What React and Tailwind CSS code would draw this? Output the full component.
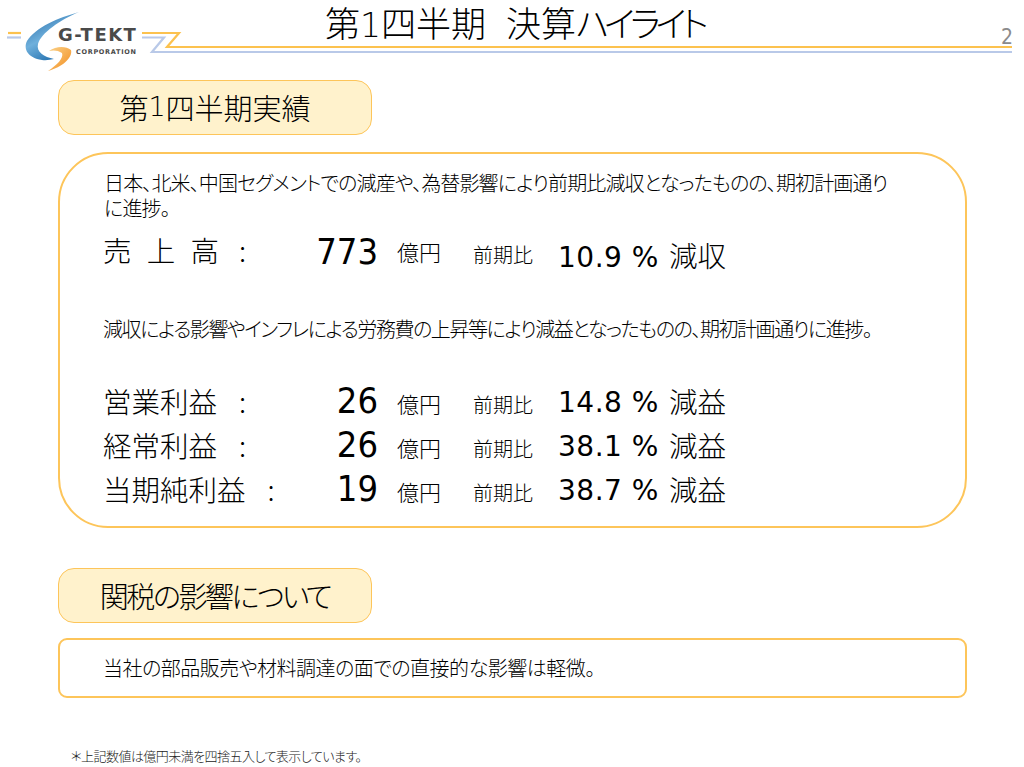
const rows = [
  { label: "営業利益", n: "26", v: "14.8 %", r: "減益" },
  { label: "経常利益", n: "26", v: "38.1 %", r: "減益" },
  { label: "当期純利益", n: "19", v: "38.7 %", r: "減益" },
];

function Logo() {
  return (
    <svg className="absolute left-0 top-0" width="1024" height="80" viewBox="0 0 1024 80" fill="none">
      <defs>
        <linearGradient id="sw" x1="0" y1="0" x2="0.6" y2="1">
          <stop offset="0" stopColor="#1a5f9e" />
          <stop offset="0.55" stopColor="#6fb0dc" />
          <stop offset="1" stopColor="#1f6cab" />
        </linearGradient>
        <linearGradient id="or" x1="0" y1="0" x2="1" y2="1">
          <stop offset="0" stopColor="#fbd38a" />
          <stop offset="1" stopColor="#f28c1e" />
        </linearGradient>
      </defs>
      <path d="M8 33H21" stroke="#fcc24f" strokeWidth="2.2" />
      <path d="M7 37.500H21" stroke="#b9c9e8" strokeWidth="2.2" />
      <path d="M79 12C58 18 36 27 27 41C23 49 28 58 42 60C46 60.500 50 60 54 59C44 57 36 52 38 44C41 33 60 20 79 12Z" fill="url(#sw)" />
      <path d="M49 51C56 46 66 46 71 50C73 58 62 67 48 71C57 65 64 58 62 53C58 50 53 50 49 51Z" fill="url(#or)" />
      <path d="M142 33H179L167 47H1012" stroke="#fcc24f" strokeWidth="2.200" />
      <path d="M142 37.500H164L152 52H1012" stroke="#b9c9e8" strokeWidth="2.200" />
    </svg>
  );
}

function Pill({ children, mt }) {
  return (
    <div className={`w-[314px] h-[55px] rounded-[16px] border-[1.5px] border-[#fdc55a] bg-[#fff2cc] flex items-center justify-center text-[29px] text-black whitespace-pre ${mt}`}>
      {children}
    </div>
  );
}

const num = "[font-family:'DejaVu_Sans_Condensed','DejaVu_Sans',sans-serif] font-normal";
const val = "[font-family:'DejaVu_Sans',sans-serif] font-normal";
const thin = "[font-family:'DejaVu_Sans',sans-serif] font-extralight";

function Stat({ label, spaced, n, v, r, first, colonGap }) {
  return (
    <div className={`grid grid-cols-[213px_62px_95px_85px_111px_auto] items-baseline h-[44px] ${first ? "mt-[5px]" : ""}`}>
      <div className={`text-[28.5px] whitespace-pre flex items-baseline ${first ? "-translate-y-[2px]" : ""}`}>
        <span className={spaced ? "[word-spacing:9px]" : ""}>{label}</span>
        <span className={colonGap}>:</span>
      </div>
      <div className={`text-[36px] text-right ${num}`}>{n}</div>
      <div className={`text-[22px] pl-[19px] whitespace-nowrap ${first ? "-translate-y-[3px]" : ""}`}>億円</div>
      <div className={`text-[20px] whitespace-nowrap ${first ? "-translate-y-[1px]" : ""}`}>前期比</div>
      <div className={`text-[28px] tracking-[0.5px] whitespace-pre ${val} ${first ? "translate-y-[3px]" : "-translate-y-[1px]"}`}>{v}</div>
      <div className={`text-[28.5px] whitespace-nowrap ${first ? "translate-y-[3px]" : ""}`}>{r}</div>
    </div>
  );
}

export default function App() {
  return (
    <div className="relative w-[1024px] h-[767px] overflow-hidden bg-white text-black font-light [font-family:'Noto_Sans_CJK_JP',sans-serif] [font-feature-settings:'palt']">
      <Logo />
      <header className="relative h-[80px]">
        <div className="absolute left-[58px] top-[26px] text-[18px] font-bold tracking-[1.5px] text-[#4a4a4a] leading-none [font-family:'DejaVu_Sans',sans-serif]">G-TEKT</div>
        <div className="absolute left-[76px] top-[49px] text-[6.500px] font-bold tracking-[0.7px] text-[#4a4a4a] leading-none [font-family:'DejaVu_Sans',sans-serif]">CORPORATION</div>
        <h1 className="absolute left-[325px] top-0 text-[35px] font-light leading-[44px] whitespace-pre text-black">
          第<span className={`${thin} text-[33px]`}>1</span>四半期<span className="inline-block w-[20px]"></span>決算<span className="tracking-[-4.8px]">ハイライト</span>
        </h1>
        <div className={`absolute right-[11px] top-[27px] text-[21px] leading-none text-[#8b8b8b] ${num}`}>2</div>
      </header>
      <main className="pl-[58px]">
        <Pill>第<span className={`${thin} text-[27px]`}>1</span>四半期実績</Pill>
        <section className="mt-[17px] w-[909px] h-[376px] rounded-[50px] border-2 border-[#fdc55a] pl-[43px] pt-[16px]">
          <p className="text-[20px] leading-[25px] tracking-[-0.87px] w-[792px] pl-[1px]">日本、北米、中国セグメントでの減産や、為替影響により前期比減収となったものの、期初計画通りに進捗。</p>
          <Stat label="売 上 高" spaced n="773" v="10.9 %" r="減収" first colonGap="ml-[20px]" />
          <p className="text-[20px] leading-[25px] tracking-[-1.44px] mt-[47px]">減収による影響やインフレによる労務費の上昇等により減益となったものの、期初計画通りに進捗。</p>
          <div className="mt-[33px]">
            {rows.map((x) => (
              <Stat key={x.label} label={x.label} n={x.n} v={x.v} r={x.r} colonGap="ml-[22px]" />
            ))}
          </div>
        </section>
        <Pill mt="mt-[40px]"><span className="tracking-[-2.4px]">関税の影響について</span></Pill>
        <section className="mt-[15px] w-[909px] h-[60px] rounded-[9px] border-2 border-[#fdc55a] pl-[43px] flex items-center text-[20px] tracking-[-0.5px]">
          当社の部品販売や材料調達の面での直接的な影響は軽微。
        </section>
        <p className="mt-[49px] ml-[13px] text-[13px] tracking-[-0.55px] leading-[18px] text-[#222]">＊上記数値は億円未満を四捨五入して表示しています。</p>
      </main>
    </div>
  );
}
